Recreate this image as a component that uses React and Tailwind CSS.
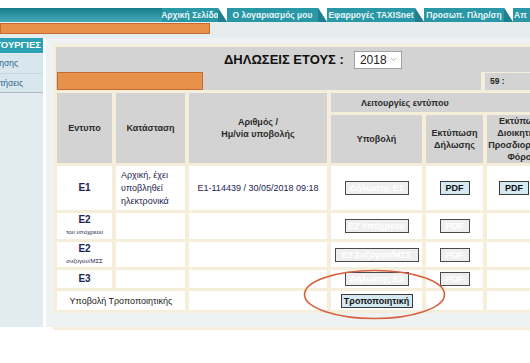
import { ChevronDown } from "lucide-react";

const tabs = [
  { label: "Αρχική Σελίδα", w: "w-[56px] justify-center" },
  { label: "Ο λογαριασμός μου", w: "w-[91px] justify-center" },
  { label: "Εφαρμογές TAXISnet", w: "w-[88px] justify-center" },
  { label: "Προσωπ. Πληρ/ση", w: "w-[80px] justify-center" },
  { label: "Απ", w: "w-[40px] justify-start pl-[1px]" },
];

function TabNotch() {
  return (
    <svg width="9" height="14" viewBox="0 0 9 14" className="shrink-0">
      <polygon points="0,0 9,0 9,14" fill="#ffffff" />
      <polygon points="0,0 9,14 0,14" fill="#1f7f8d" />
    </svg>
  );
}

function SoftButton({ label, w }) {
  return (
    <span
      className={`inline-flex h-[14px] items-center justify-center border border-[#4a4a4a] bg-[#efefef] align-middle text-[9px] font-bold text-white ${w}`}
    >
      {label}
    </span>
  );
}

function BlueButton({ label, w }) {
  return (
    <span
      className={`inline-flex h-[14px] items-center justify-center border border-[#3a3a3a] bg-[#d4e9f2] align-middle text-[9px] font-bold text-[#111] ${w}`}
    >
      {label}
    </span>
  );
}

const th = "bg-[#d3d3d3] text-[9px] font-bold text-[#2b2b2b] text-center leading-[12px]";
const td = "bg-white text-[9px] leading-[12px] text-[#1d2450] text-center";

export default function App() {
  return (
    <div className="relative h-[363px] w-[530px] overflow-hidden bg-white font-['Liberation_Sans',Arial,sans-serif]">
      <div className="h-[8px]" />

      {/* top tab bar */}
      <nav className="flex h-[14px] items-stretch bg-gradient-to-b from-[#137c8c] to-[#46a9b6] pl-[162px]">
        {tabs.map((t, i) => (
          <div key={t.label} className="flex shrink-0 items-stretch">
            <span
              className={`flex items-center whitespace-nowrap bg-[#2a97a6] text-[8.5px] font-bold text-[#e9f6f8] ${t.w}`}
            >
              {t.label}
            </span>
            {i < tabs.length - 1 && <TabNotch />}
          </div>
        ))}
      </nav>

      {/* grey strip with redacted bar */}
      <div className="h-[16px] bg-[#e6edef] pt-[1px]">
        <div className="h-[11px] w-[210px] border border-[#c46c34] bg-[#e8914a]" />
      </div>

      <div className="flex h-[289px]">
        {/* left menu (scrolled) */}
        <aside className="w-[43px] shrink-0 bg-[#e2ecf0]">
          <div className="flex h-[15px] items-center justify-end overflow-hidden whitespace-nowrap bg-[#2ba2b3] pr-[2px] text-[9.5px] font-bold text-white">
            ΛΕΙΤΟΥΡΓΙΕΣ
          </div>
          <div className="mt-[1px] flex h-[20px] items-center justify-end overflow-hidden whitespace-nowrap border-b border-[#c9d7de] bg-[#d8e7ee] pr-[25px] text-[8.5px] text-[#2e5f8a]">
            Φόρμα Αναζήτησης
          </div>
          <div className="flex h-[19px] items-center justify-end overflow-hidden whitespace-nowrap border-b border-[#a9b9c1] bg-[#d8e7ee] pr-[20px] text-[8.5px] text-[#2e5f8a]">
            Εκκρεμείς αιτήσεις
          </div>
        </aside>

        <main className="ml-[3px] flex-1 bg-[#eef2f3] pl-[7px] pt-[6px]">
          <div className="w-[560px] bg-[#f4eedb]">
            <div className="px-[3px] pt-[3px]">
              <div className="flex h-[25px] items-center bg-[#d3d3d3] pl-[168px]">
                <span className="text-[13px] font-bold text-[#111]">ΔΗΛΩΣΕΙΣ ΕΤΟΥΣ :</span>
                <span className="ml-[10px] flex h-[18px] w-[48px] items-center justify-between border border-[#a0a0a0] bg-white pl-[5px] pr-[3px] text-[12px] text-[#222]">
                  2018
                  <ChevronDown size={9} strokeWidth={1.5} className="text-[#777]" />
                </span>
              </div>
              <div className="flex h-[18px] gap-[4px]">
                <div className="flex w-[425px] items-stretch bg-[#d3d3d3] pl-[1px]">
                  <div className="w-[146px] border border-[#c46c34] bg-[#e8914a]" />
                </div>
                <div className="mt-[1px] flex flex-1 items-center bg-[#d3d3d3] pl-[5px] text-[8.5px] font-bold text-[#222]">
                  59 :
                </div>
              </div>
            </div>

            <table className="table-fixed border-separate border-spacing-x-[4px] border-spacing-y-[3px]">
              <colgroup>
                <col className="w-[55px]" />
                <col className="w-[69px]" />
                <col className="w-[138px]" />
                <col className="w-[91px]" />
                <col className="w-[57px]" />
                <col className="w-[70px]" />
              </colgroup>
              <thead>
                <tr className="h-[19px]">
                  <th rowSpan={2} className={th}>Εντυπο</th>
                  <th rowSpan={2} className={th}>Κατάσταση</th>
                  <th rowSpan={2} className={th}>
                    Αριθμός /<br />Ημ/νία υποβολής
                  </th>
                  <th colSpan={3} className={`${th} whitespace-nowrap text-left pl-[30px]`}>Λειτουργίες εντύπου</th>
                </tr>
                <tr className="h-[45px]">
                  <th className={th}>Υποβολή</th>
                  <th className={th}>
                    Εκτύπωση<br />Δήλωσης
                  </th>
                  <th className={`${th} whitespace-nowrap leading-[11px]`}>
                    Εκτύπωση<br />Διοικητικού<br />Προσδιορισμού<br />Φόρου
                  </th>
                </tr>
              </thead>
              <tbody>
                <tr className="h-[44px]">
                  <td className={`${td} text-[10px] font-bold`}>Ε1</td>
                  <td className={`${td} text-left pl-[5px] leading-[13px]`}>
                    Αρχική, έχει<br />υποβληθεί<br />ηλεκτρονικά
                  </td>
                  <td className={td}>E1-114439 / 30/05/2018 09:18</td>
                  <td className={td}>
                    <SoftButton label="Δήλωσης Ε1" w="w-[64px]" />
                  </td>
                  <td className={td}>
                    <BlueButton label="PDF" w="w-[30px]" />
                  </td>
                  <td className={`${td} pl-[12px] text-left`}>
                    <BlueButton label="PDF" w="w-[30px]" />
                  </td>
                </tr>
                <tr className="h-[26px]">
                  <td className={`${td} leading-[10px]`}>
                    <div className="text-[10px] font-bold">Ε2</div>
                    <div className="text-[6px]">του υπόχρεου</div>
                  </td>
                  <td className={td} />
                  <td className={td} />
                  <td className={td}>
                    <SoftButton label="Ε2 Υπόχρεου" w="w-[64px]" />
                  </td>
                  <td className={td}>
                    <SoftButton label="PDF" w="w-[30px]" />
                  </td>
                  <td className={td} />
                </tr>
                <tr className="h-[25px]">
                  <td className={`${td} leading-[10px]`}>
                    <div className="text-[10px] font-bold">Ε2</div>
                    <div className="text-[6px]">συζύγου/ΜΣΣ</div>
                  </td>
                  <td className={td} />
                  <td className={td} />
                  <td className={td}>
                    <SoftButton label="Ε2 Συζύγου/ΜΣΣ" w="w-[84px]" />
                  </td>
                  <td className={td}>
                    <SoftButton label="PDF" w="w-[30px]" />
                  </td>
                  <td className={td} />
                </tr>
                <tr className="h-[18px]">
                  <td className={`${td} text-[10px] font-bold`}>Ε3</td>
                  <td className={td} />
                  <td className={td} />
                  <td className={td}>
                    <SoftButton label="Δήλωσης Ε3" w="w-[64px]" />
                  </td>
                  <td className={td}>
                    <SoftButton label="PDF" w="w-[30px]" />
                  </td>
                  <td className={td} />
                </tr>
                <tr className="h-[19px]">
                  <td colSpan={2} className={`${td} text-[#222]`}>Υποβολή Τροποποιητικής</td>
                  <td className={td} />
                  <td className={td}>
                    <BlueButton label="Τροποποιητική" w="w-[72px]" />
                  </td>
                  <td className={td} />
                  <td className={td} />
                </tr>
              </tbody>
            </table>
          </div>
        </main>
      </div>

      <div className="ml-[53px] h-[3px] bg-[#f4eedb]" />

      {/* hand-drawn highlight */}
      <svg className="pointer-events-none absolute left-[303px] top-[269px]" width="143" height="51" viewBox="0 0 143 51">
        <ellipse cx="71.5" cy="25.5" rx="70" ry="24" fill="none" stroke="#d8603f" strokeWidth="1.6" />
      </svg>
    </div>
  );
}
